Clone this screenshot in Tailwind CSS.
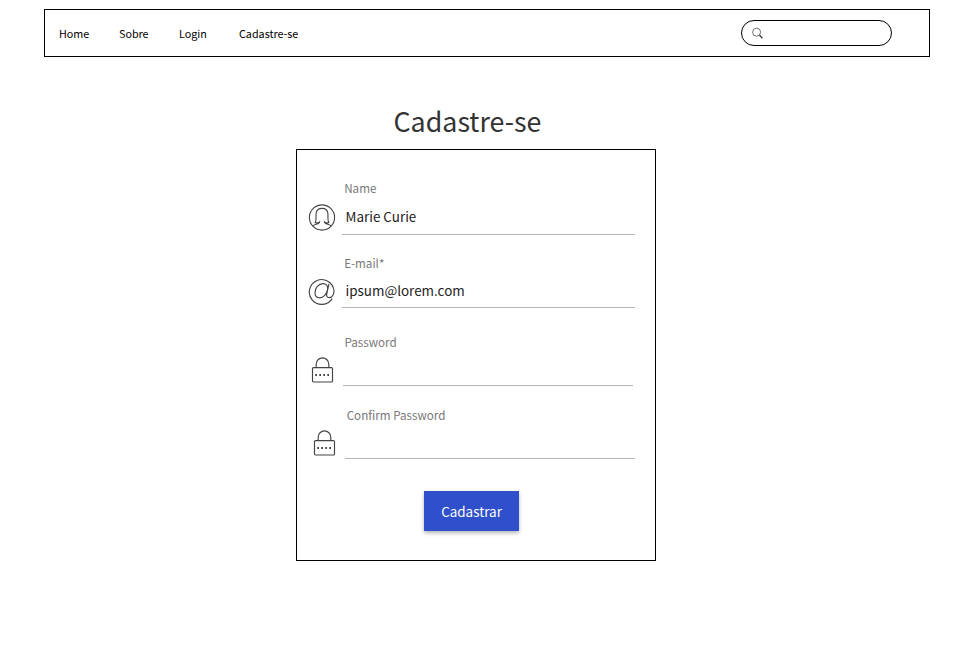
<!DOCTYPE html>
<html lang="pt-BR">
<head>
<meta charset="utf-8">
<title>Cadastre-se</title>
<script src="https://cdn.jsdelivr.net/npm/@tailwindcss/browser@4"></script>
</head>
<body class="h-[651px] overflow-hidden bg-white font-['Noto_Sans_CJK_SC','Noto_Sans',sans-serif]">
<header class="mt-[9px] ml-11 flex h-12 w-[886px] items-center border border-black pr-[37px] pl-3.5 text-[10.75px] text-black">
  <nav class="flex flex-1 pt-[2px]">
    <a class="w-[60px]">Home</a>
    <a class="w-[60px]">Sobre</a>
    <a class="w-[60px]">Login</a>
    <a>Cadastre-se</a>
  </nav>
  <div class="flex h-[26px] w-[151px] items-center rounded-full border border-black pl-2.5">
    <svg class="size-3" viewBox="0 0 12 12" fill="none" stroke="#333"><circle cx="4.6" cy="5.2" r="4" stroke-width=".7"/><path d="M7.5 8.1 10.4 11.2" stroke-width="1.3"/></svg>
  </div>
</header>
<main>
  <h1 class="mt-[45px] ml-[393.5px] h-[37px] text-[26.8px] leading-[38px] text-[#333]">Cadastre-se</h1>
  <form class="mt-2.5 ml-[296px] flex h-[412px] w-[360px] flex-col border border-black pt-7 text-[11.65px]">
    <div>
      <label class="block h-5 pl-[47.2px] leading-5 text-[#787878]">Name</label>
      <div class="flex h-[37px] items-end pl-[11px]">
        <svg class="mr-[6px] mb-[3px] size-7" viewBox="0 0 28 28" fill="none" stroke="#444" stroke-width="1.1"><circle cx="14" cy="13.5" r="12.6"/><path d="M4.8 22.1C6.5 19.9 11.6 20.6 11.6 17.8C10.6 18.8 8.8 19 7.2 18.7C8.9 15.5 7.6 12 8.2 8.8C8.8 5.6 10.8 4.4 14 4.4S19.2 5.6 19.8 8.8C20.4 12 19.1 15.5 20.8 18.7C19.2 19 17.4 18.8 16.4 17.8C16.4 20.6 21.5 19.9 23.2 22.1"/></svg>
        <div class="flex h-[37px] w-[293px] items-center border-b border-[#b5b5b5] pt-[1px] pl-[3.5px] text-[13.45px] text-[#222]">Marie Curie</div>
      </div>
    </div>
    <div class="mt-[18px]">
      <label class="block h-5 pl-[47.2px] leading-5 text-[#787878]">E-mail*</label>
      <div class="flex h-[35px] items-end pl-[11px]">
        <svg class="mr-[6px] mb-[3px] size-7" viewBox="0 0 28 28" fill="none" stroke="#444" stroke-width="1.15"><path d="M24.2 21.6A12.4 12.4 0 1 1 26 13.5C26 17.8 23.9 20.6 21.2 20.6C18.9 20.6 18.3 18.8 18.8 16.6L21 6.9M19.6 12.3C20.1 8.9 18 6.6 15 6.6C10.6 6.6 7 11 7 15.5C7 18.7 8.8 20.8 11.6 20.8C15.4 20.8 18.8 17.1 19.6 12.3Z"/></svg>
        <div class="flex h-[35px] w-[293px] items-center border-b border-[#b5b5b5] pt-[1px] pl-[3.5px] text-[13.45px] text-[#222]">ipsum@lorem.com</div>
      </div>
    </div>
    <div class="mt-6">
      <label class="block h-5 pl-[47.5px] leading-5 text-[#787878]">Password</label>
      <div class="flex h-[34px] items-end pl-[14px]">
        <svg class="mr-[8px] mb-[2px] h-7 w-6" viewBox="0 0 24 28" fill="none" stroke="#444" stroke-width="1.15"><rect x="1.5" y="11.6" width="20" height="14.4" rx="1"/><path d="M5.2 12V8.2a6.3 6.3 0 0 1 12.6 0V12"/><path d="M4.3 19h1.7M8.3 19h1.7M12.3 19h1.7M16.3 19h1.7" stroke-width="1.8"/></svg>
        <div class="h-[34px] w-[290px] border-b border-[#b5b5b5]"></div>
      </div>
    </div>
    <div class="mt-[19px]">
      <label class="block h-5 pl-[49.7px] leading-5 text-[#787878]">Confirm Password</label>
      <div class="flex h-[34px] items-end pl-[16px]">
        <svg class="mr-[8px] mb-[2px] h-7 w-6" viewBox="0 0 24 28" fill="none" stroke="#444" stroke-width="1.15"><rect x="1.5" y="11.6" width="20" height="14.4" rx="1"/><path d="M5.2 12V8.2a6.3 6.3 0 0 1 12.6 0V12"/><path d="M4.3 19h1.7M8.3 19h1.7M12.3 19h1.7M16.3 19h1.7" stroke-width="1.8"/></svg>
        <div class="h-[34px] w-[290px] border-b border-[#b5b5b5]"></div>
      </div>
    </div>
    <button type="button" class="mt-8 ml-[127px] h-10 w-[95px] bg-[#3050cb] pt-[1px] text-[13.45px] text-white shadow-[0_2px_4px_rgba(0,0,0,0.3)]">Cadastrar</button>
  </form>
</main>
</body>
</html>
